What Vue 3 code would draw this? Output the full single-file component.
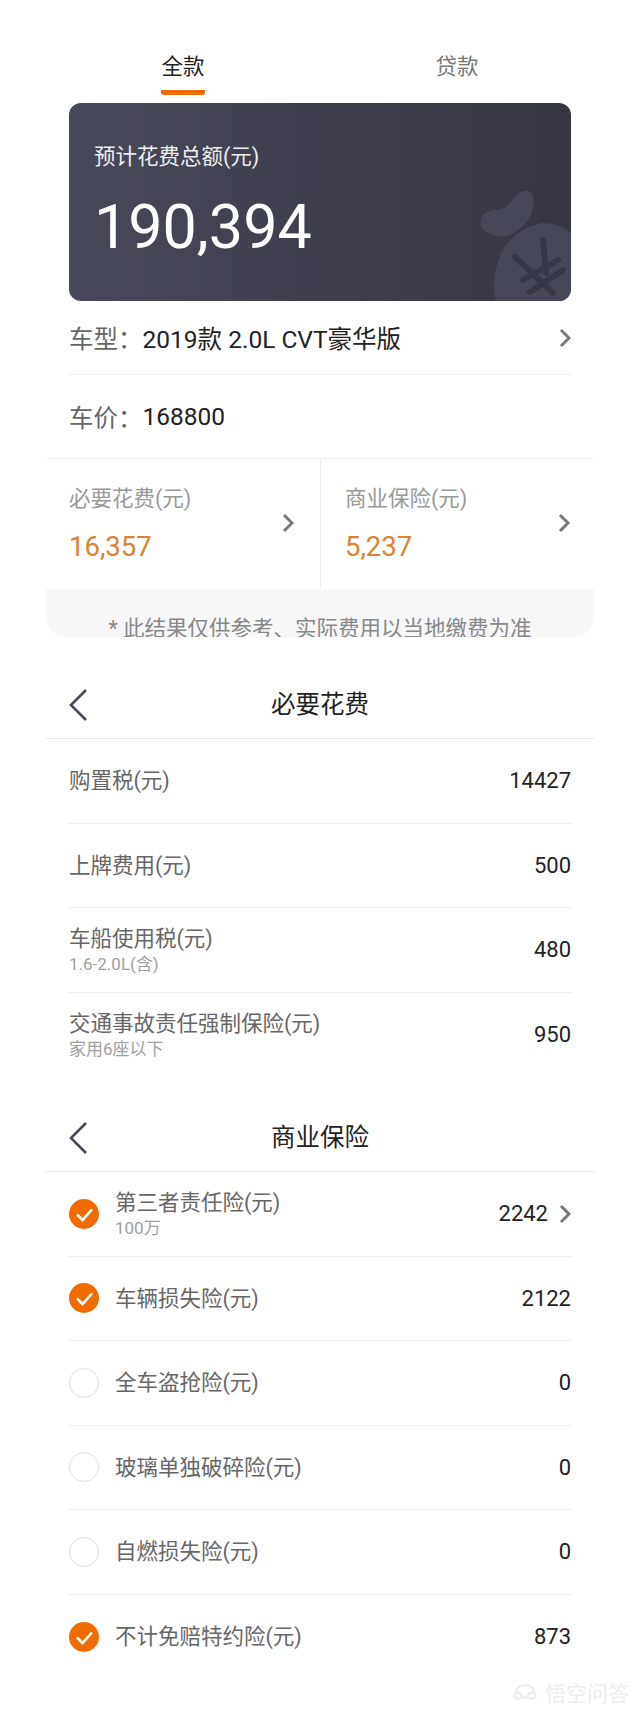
<template>
  <div class="page">
    <div class="tabs">
      <div class="tab active"><span>全款</span></div>
      <div class="tab"><span>贷款</span></div>
    </div>

    <div class="card">
      <div class="card-label">预计花费总额(元)</div>
      <div class="card-total">190,394</div>
      <svg class="bag" viewBox="0 0 91 111">
        <path d="M3 39C-3 30 2 22 14 20C26 19 30 14 34 8C38 2 46-1 50 2C55 6 54 16 51 24C47 34 38 43 26 46C16 47 8 45 3 39z" fill="#474857" />
        <path d="M16 111C12 95 14 78 22 62C30 46 45 36 63 33C73 33 84 37 91 43V111z" fill="#474857" />
        <path d="M35 67L73 103M63 50L66 83M43 90L78 70M50 102L83 80" stroke="#363745" stroke-width="6" stroke-linecap="round" fill="none" />
      </svg>
    </div>

    <div class="info first">
      <span class="info-key">车型：</span><span class="info-val">2019款 2.0L CVT豪华版</span>
      <svg class="arrow push" viewBox="0 0 12 20"><path d="M2 2l8 8-8 8" /></svg>
    </div>
    <div class="info second">
      <span class="info-key">车价：</span><span class="info-val">168800</span>
    </div>

    <div class="split">
      <div class="split-cell" v-for="item in summary" :key="item.name">
        <div>
          <div class="split-name">{{ item.name }}</div>
          <div class="split-num">{{ item.value }}</div>
        </div>
        <svg class="arrow" viewBox="0 0 12 20"><path d="M2 2l8 8-8 8" /></svg>
      </div>
    </div>
    <div class="note">* 此结果仅供参考、实际费用以当地缴费为准</div>

    <div class="head head-a">
      <svg class="back" viewBox="0 0 20 34"><path d="M18 2L3 17l15 15" /></svg>
      <span>必要花费</span>
    </div>
    <div class="list">
      <div class="row" v-for="item in required" :key="item.name">
        <div>
          <div class="row-name">{{ item.name }}</div>
          <div class="row-sub" v-if="item.sub">{{ item.sub }}</div>
        </div>
        <div class="row-val">{{ item.value }}</div>
      </div>
    </div>

    <div class="head head-b">
      <svg class="back" viewBox="0 0 20 34"><path d="M18 2L3 17l15 15" /></svg>
      <span>商业保险</span>
    </div>
    <div class="list">
      <div class="row" v-for="item in insurance" :key="item.name">
        <div class="row-left">
          <span class="check" :class="{ on: item.on }">
            <svg v-if="item.on" viewBox="0 0 30 30"><path d="M8 15.5l5.5 5.5L23 10.5" /></svg>
          </span>
          <div>
            <div class="row-name">{{ item.name }}</div>
            <div class="row-sub" v-if="item.sub">{{ item.sub }}</div>
          </div>
        </div>
        <div class="row-right">
          <span class="row-val">{{ item.value }}</span>
          <svg v-if="item.more" class="arrow" viewBox="0 0 12 20"><path d="M2 2l8 8-8 8" /></svg>
        </div>
      </div>
    </div>

    <div class="mark">
      <svg viewBox="0 0 28 20"><path d="M2 13c3-4 6-4 8 0s5 4 7 0 6-4 9 0M2 13c3 5 6 5 8 2M26 13c-3 5-6 5-8 2M14 2c-5 0-9 3-10 7M14 2c5 0 9 3 10 7" /></svg>
      <span>悟空问答</span>
    </div>
  </div>
</template>

<script setup>
const summary = [
  { name: '必要花费(元)', value: '16,357' },
  { name: '商业保险(元)', value: '5,237' }
]

const required = [
  { name: '购置税(元)', value: '14427' },
  { name: '上牌费用(元)', value: '500' },
  { name: '车船使用税(元)', sub: '1.6-2.0L(含)', value: '480' },
  { name: '交通事故责任强制保险(元)', sub: '家用6座以下', value: '950' }
]

const insurance = [
  { name: '第三者责任险(元)', sub: '100万', value: '2242', on: true, more: true },
  { name: '车辆损失险(元)', value: '2122', on: true },
  { name: '全车盗抢险(元)', value: '0' },
  { name: '玻璃单独破碎险(元)', value: '0' },
  { name: '自燃损失险(元)', value: '0' },
  { name: '不计免赔特约险(元)', value: '873', on: true }
]
</script>

<style scoped>
.page {
  position: relative;
  width: 640px;
  height: 1713px;
  overflow: hidden;
  background: #fff;
  font-family: Roboto, "Noto Sans CJK SC", sans-serif;
  color: #1c1c1c;
}

.tabs {
  display: flex;
  height: 95px;
  margin: 0 46px;
}

.tab {
  flex: 1;
  display: flex;
  justify-content: center;
  font-size: 21.5px;
  color: #777;
  padding-top: 52px;
  line-height: 30px;
}

.tab span {
  height: 43px;
}

.tab.active {
  color: #222;
}

.tab.active span {
  height: 38px;
  border-bottom: 5px solid #ef6c00;
  border-radius: 0 0 3px 3px;
}

.card {
  position: relative;
  box-sizing: border-box;
  height: 198px;
  margin: 8px 69px 0;
  padding: 39px 25px 0;
  border-radius: 12px;
  overflow: hidden;
  color: #fff;
  background: linear-gradient(90deg, #474859, #363642);
}

.card-label {
  font-size: 21.5px;
  line-height: 30px;
  color: #eee;
}

.card-total {
  margin: 19px 0 0;
  font-size: 61px;
  line-height: 72px;
}

.bag {
  position: absolute;
  right: 0;
  bottom: 0;
  width: 91px;
  height: 111px;
}

.info {
  display: flex;
  align-items: center;
  margin: 0 69px;
  font-size: 24.5px;
}

.info.first {
  height: 73px;
  border-bottom: 1px solid #eee;
}

.info.second {
  height: 83px;
}

.info-key {
  color: #666;
}

.info-val {
  color: #222;
}

.push {
  margin-left: auto;
}

.arrow {
  width: 12px;
  height: 20px;
  flex-shrink: 0;
}

.arrow path {
  fill: none;
  stroke: #777;
  stroke-width: 3;
}

.split {
  display: flex;
  height: 130px;
  margin: 0 46px;
  border-top: 1px solid #eee;
}

.split-cell {
  flex: 1;
  display: flex;
  align-items: center;
  justify-content: space-between;
  padding: 0 26px 2px 23px;
}

.split-cell + .split-cell {
  padding-left: 24px;
  padding-right: 24px;
  border-left: 1px solid #eee;
}

.split-name {
  font-size: 21.5px;
  line-height: 30px;
  color: #999;
}

.split-num {
  margin-top: 17px;
  font-size: 27.5px;
  line-height: 32px;
  color: #dd8133;
}

.note {
  height: 48px;
  margin: 0 46px;
  padding-top: 27px;
  box-sizing: border-box;
  overflow: hidden;
  border-radius: 0 0 20px 20px;
  background: #f7f7f8;
  text-align: center;
  font-size: 21.5px;
  line-height: 26px;
  color: #888;
}

.head {
  display: flex;
  align-items: center;
  justify-content: center;
  position: relative;
  height: 60px;
  padding-bottom: 6px;
  margin: 0 46px;
  border-bottom: 1px solid #e8e8e8;
  font-size: 24.5px;
  color: #222;
}

.head-a {
  margin-top: 35px;
}

.head-b {
  margin-top: 28px;
}

.back {
  position: absolute;
  left: 22px;
  top: 16px;
  width: 20px;
  height: 34px;
}

.back path {
  fill: none;
  stroke: #474859;
  stroke-width: 2.6;
}

.row {
  display: flex;
  align-items: center;
  justify-content: space-between;
  height: 84.5px;
  box-sizing: border-box;
  margin: 0 69px;
  border-bottom: 1px solid #eee;
}

.row:last-child {
  border-bottom: 0;
}

.row-left,
.row-right {
  display: flex;
  align-items: center;
}

.row-left {
  gap: 16px;
}

.row-right {
  gap: 11px;
}

.row-name {
  font-size: 21.5px;
  line-height: 29px;
  color: #666;
}

.row-sub {
  font-size: 17px;
  line-height: 22px;
  color: #a0a0a0;
}

.row-val {
  font-size: 22px;
  color: #222;
}

.check {
  width: 30px;
  height: 30px;
  box-sizing: border-box;
  border: 1px solid #ddd;
  border-radius: 50%;
}

.check.on {
  border: 0;
  background: #f06c00;
}

.check svg {
  display: block;
  width: 30px;
  height: 30px;
}

.check path {
  fill: none;
  stroke: #fff;
  stroke-width: 2.6;
}

.mark {
  position: absolute;
  right: 11px;
  bottom: 6px;
  display: flex;
  align-items: center;
  gap: 7px;
  font-size: 21px;
  color: #ececec;
}

.mark svg {
  width: 26px;
  height: 19px;
}

.mark path {
  fill: none;
  stroke: #ececec;
  stroke-width: 2.5;
}
</style>
